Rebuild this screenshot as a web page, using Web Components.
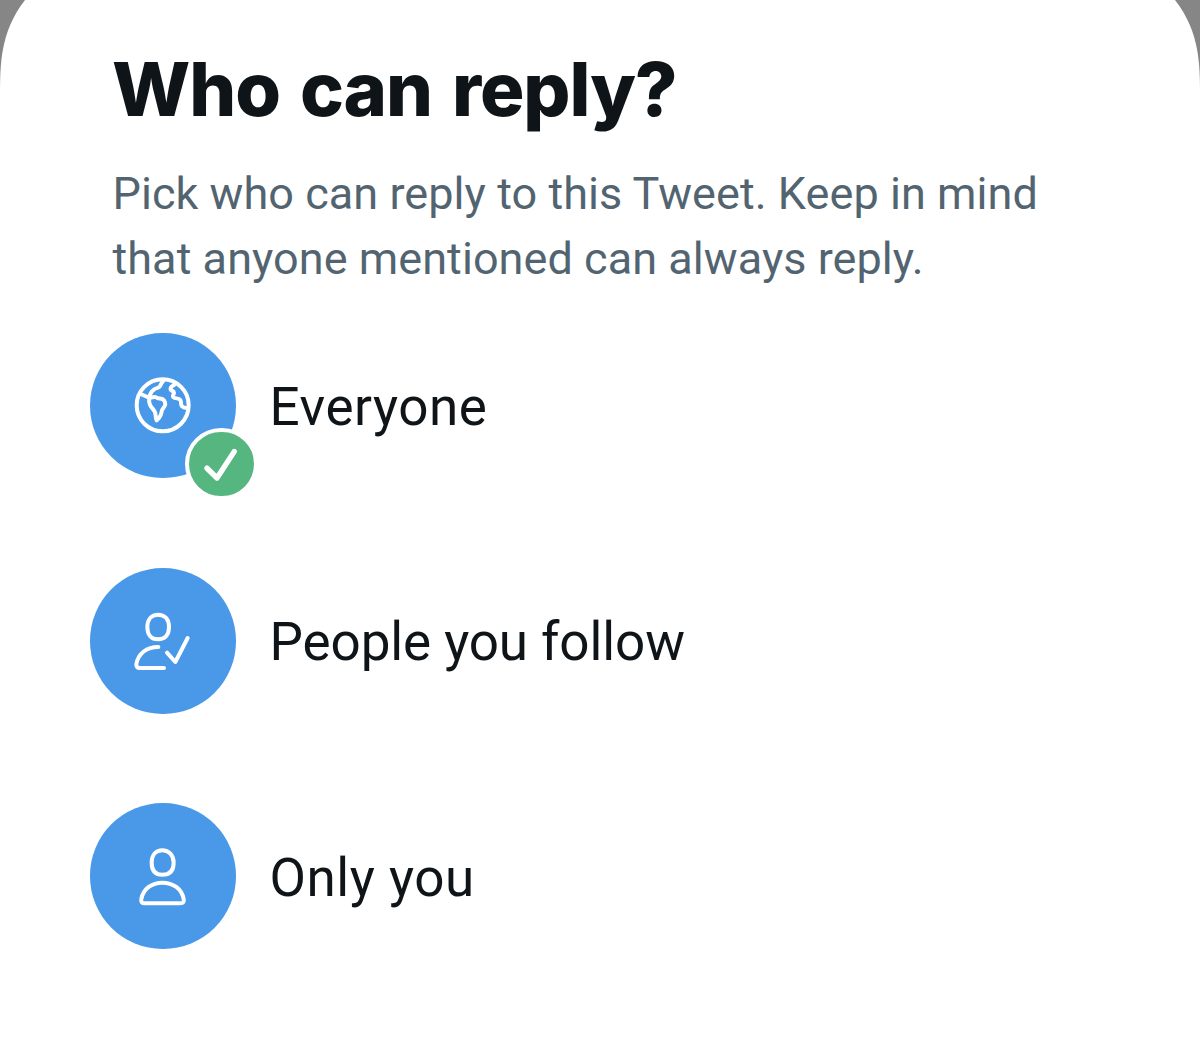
<!DOCTYPE html>
<html lang="en">
<head>
<meta charset="utf-8">
<title>Who can reply?</title>
<style>
  body {
    margin: 0;
    overflow: hidden;
    background: #868686;
    font-family: Roboto, "Liberation Sans", sans-serif;
    color: #0f1419;
  }
</style>
</head>
<body>
<reply-sheet>
  <span slot="title">Who can reply?</span>
  <span slot="hint">Pick who can reply to this Tweet. Keep in mind<br>that anyone mentioned can always reply.</span>
  <reply-option icon="globe" selected>Everyone</reply-option>
  <reply-option icon="following" style="--label-spacing: -0.1px">People you follow</reply-option>
  <reply-option icon="person">Only you</reply-option>
</reply-sheet>

<script>
const icons = {
  globe: `<circle cx="128" cy="122" r="78"/>
    <path d="M62 88 L89 100 C89 84 98 73 116 68 C122 66 121 58 129 50"/>
    <path d="M89 100 C97 98 101 96 109 98 C114 103 120 100 127 103 C135 108 139 118 133 126 C126 133 124 141 123 149 C120 157 116 163 110 167 C106 160 108 153 106 146 C105 138 98 133 93 126 C88 118 86 108 89 100 Z"/>
    <path d="M166 55 C164 64 149 63 152 75 C156 80 162 78 162 85 C160 92 156 94 161 98 C166 103 175 99 181 106 C185 112 181 120 186 125 C191 131 197 130 203 130"/>`,
  following: `<path d="M114 45 C95 45 82 59 82 82 C82 106 94 119 114 119 C135 119 147 106 147 82 C147 59 134 45 114 45 Z"/>
    <path d="M115 142 C80 142 55 161 49 193 C48 200 52 205 59 205 H132"/>
    <path d="M141 159 L166 187 L203 115"/>`,
  person: `<path d="M127 44 C108 44 95 58 95 81 C95 106 107 117 127 117 C148 117 161 106 161 81 C161 58 146 44 127 44 Z"/>
    <path d="M127 141 C96 141 70 159 64 190 C62 198 66 203 74 203 H181 C190 203 193 198 191 190 C185 159 159 141 127 141 Z"/>`
};

class CheckBadge extends HTMLElement {
  constructor() {
    super();
    this.attachShadow({mode: 'open'}).innerHTML = `<style>
      :host {
        display: block;
        box-sizing: border-box;
        width: 72.5px;
        height: 72.5px;
        border: 4px solid #fff;
        border-radius: 50%;
        background: #55b680;
      }
      svg { display: block; }
    </style>
    <svg width="65" height="65" viewBox="0 0 65 65" fill="none" stroke="#fff"
      stroke-width="5.4" stroke-linecap="round" stroke-linejoin="round">
      <path d="M18 36.2 L28 46 L45.2 19.6"/>
    </svg>`;
  }
}
window.customElements.define('check-badge', CheckBadge);

class ReplyOption extends HTMLElement {
  static get observedAttributes() {
    return ['icon'];
  }

  constructor() {
    super();
    this.attachShadow({mode: 'open'}).innerHTML = `<style>
      :host {
        display: flex;
        align-items: center;
        gap: 34px;
        height: 145.5px;
      }
      .disc {
        position: relative;
        flex: none;
        display: flex;
        align-items: center;
        justify-content: center;
        width: 145.5px;
        height: 145.5px;
        border-radius: 50%;
        background: #4a99e9;
      }
      check-badge {
        display: none;
        position: absolute;
        left: 95px;
        top: 95px;
      }
      :host([selected]) check-badge { display: block; }
      .label {
        font-size: 53px;
        line-height: 64px;
        letter-spacing: var(--label-spacing, 0.55px);
        white-space: nowrap;
        padding-top: 3px;
      }
    </style>
    <div class="disc">
      <svg id="icon" width="85" height="85" viewBox="0 -5 255 255" fill="none" stroke="#fff"
        stroke-width="12" stroke-linecap="round" stroke-linejoin="round"></svg>
      <check-badge></check-badge>
    </div>
    <div class="label"><slot></slot></div>`;
  }

  attributeChangedCallback(attrName, oldVal, newVal) {
    switch (attrName) {
      case 'icon': this.shadowRoot.querySelector('#icon').innerHTML = icons[newVal] || ''; break;
    }
  }
}
window.customElements.define('reply-option', ReplyOption);

class ReplySheet extends HTMLElement {
  constructor() {
    super();
    this.attachShadow({mode: 'open'}).innerHTML = `<style>
      :host {
        display: block;
        box-sizing: border-box;
        height: 1037px;
        padding: 45px 90px 0;
        background: #fff;
        /* continuous corners that run off the top edge */
        clip-path: path("M25 0 C0 32.3 0 64.7 0 97 V1037 H1200 V97 C1200 64.7 1200 32.3 1175 0 Z");
      }
      h1 {
        margin: 0 0 0 22px;
        font-family: Inter, Roboto, sans-serif;
        font-size: 74px;
        font-weight: 800;
        line-height: 89px;
        letter-spacing: -1.1px;
        word-spacing: 5px;
        white-space: nowrap;
      }
      p {
        margin: 28px 0 0 22.5px;
        font-size: 45px;
        line-height: 64.5px;
        letter-spacing: 0.05px;
        color: #536471;
        white-space: nowrap;
      }
      .options {
        display: flex;
        flex-direction: column;
        gap: 89.9px;
        margin-top: 41.7px;
      }
    </style>
    <h1><slot name="title"></slot></h1>
    <p><slot name="hint"></slot></p>
    <div class="options"><slot></slot></div>`;
  }
}
window.customElements.define('reply-sheet', ReplySheet);
</script>
</body>
</html>
